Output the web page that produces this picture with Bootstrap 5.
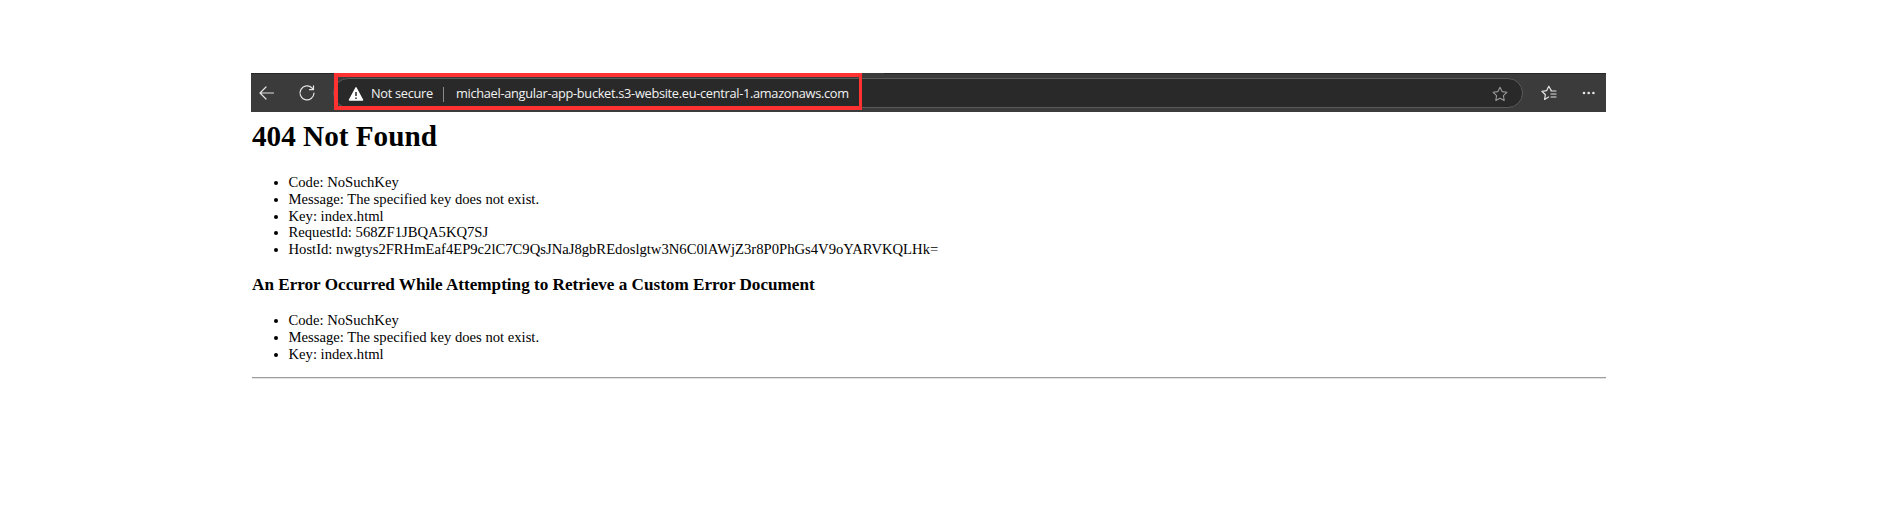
<!DOCTYPE html>
<html lang="en">
<head>
<meta charset="utf-8">
<title>404 Not Found</title>
<link href="https://cdn.jsdelivr.net/npm/bootstrap@5.3.0/dist/css/bootstrap.min.css" rel="stylesheet">
<style>
body{background:#fff;color:#000;font-family:"Liberation Serif",serif}
.page{width:1355px;margin-left:251px;padding-top:73px}
.toolbar{height:39px;padding-top:1px;background:linear-gradient(90deg,#262626 611px,#3b3b3b 611px 633px,#262626 633px) 0 0/100% 1px no-repeat #3b3b3b;color:#e4e4e4}
.toolbar svg{display:block;flex:none}
.back{margin-left:7px}
.reload{margin-left:22px}
.address{width:1190px;height:30px;margin-left:17px;border:1px solid #5a5a5a;border-radius:15px;background:#292929;padding:2px 0 0 14px;font-family:"Open Sans",sans-serif;font-size:12.8px;letter-spacing:-.31px;color:#f2f2f2;white-space:nowrap}
.sep{width:1px;height:15px;background:#8a8a8a;margin:0 12px 0 10px}
.warn{margin-right:7px}
.sec{width:62px}
.star{margin-right:14px}
.favorites{margin-left:18px}
.more{margin-left:25px}
.highlight{left:83px;top:0;width:528px;height:37px;border:3px solid #ff3131;border-width:4px 3px 4px 4px}
h1{font-size:29.2px;font-weight:700;line-height:34px;margin:7px 0 0 1px}
h3{font-size:17.15px;font-weight:700;line-height:20px;margin:16.5px 0 0 1px}
ul{font-size:14.65px;line-height:16.85px;margin:20.9px 0 0;padding-left:37.5px}
h3+ul{margin-top:17.6px}
hr{margin:14.3px 0 0 1px;border:0;height:2px;opacity:1;background:linear-gradient(#9d9d9d 50%,#e3e3e3 50%)}
</style>
</head>
<body>
<main class="page">
<div class="toolbar d-flex align-items-center position-relative">
<svg class="back" width="18" height="18" viewBox="0 0 18 18" fill="none" stroke="currentColor" stroke-width="1.2" stroke-linecap="round" stroke-linejoin="round"><path d="M15.5 9H2M8 3L2 9l6 6"/></svg>
<svg class="reload" width="18" height="18" viewBox="0 0 18 18" fill="none" stroke="currentColor" stroke-width="1.2" stroke-linecap="round" stroke-linejoin="round"><path d="M16 9a7 7 0 1 1-2-5l1.5 1.5M15.5 1.8v3.9h-4"/></svg>
<div class="address d-flex align-items-center">
<svg class="warn" width="16" height="16" viewBox="0 0 16 16"><path d="M8 1.8L14.6 14H1.4Z" fill="#fff" stroke="#fff" stroke-width="1.4" stroke-linejoin="round"/><path d="M8 6v4M8 11.4v1.5" stroke="#292929" stroke-width="1.5"/></svg>
<span class="sec">Not secure</span><span class="sep"></span><span>michael-angular-app-bucket.s3-website.eu-central-1.amazonaws.com</span>
<svg class="star ms-auto" width="16" height="16" viewBox="0 0 16 16" fill="none" stroke="#999" stroke-width="1.1" stroke-linejoin="round"><path d="M8 1.2l2.1 4.4 4.8.7-3.5 3.4.8 4.8L8 12.2l-4.2 2.3.8-4.8L1.1 6.3l4.8-.7z"/></svg>
</div>
<svg class="favorites" width="16" height="16" viewBox="0 0 16 16" fill="none" stroke="currentColor" stroke-width="1.2" stroke-linejoin="round" stroke-linecap="round"><path d="M10.3 5.6L7.8 1.2 5.7 5.6l-4.8.7 3.5 3.4-.8 4.8L7.6 12M10 6h5M10 9h5M10 12h5"/></svg>
<svg class="more" width="14" height="4" viewBox="0 0 14 4" fill="currentColor"><circle cx="2" cy="2" r="1.3"/><circle cx="6.7" cy="2" r="1.3"/><circle cx="11.4" cy="2" r="1.3"/></svg>
<div class="highlight position-absolute"></div>
</div>
<h1>404 Not Found</h1>
<ul>
<li>Code: NoSuchKey</li>
<li>Message: The specified key does not exist.</li>
<li>Key: index.html</li>
<li>RequestId: 568ZF1JBQA5KQ7SJ</li>
<li>HostId: nwgtys2FRHmEaf4EP9c2lC7C9QsJNaJ8gbREdoslgtw3N6C0lAWjZ3r8P0PhGs4V9oYARVKQLHk=</li>
</ul>
<h3>An Error Occurred While Attempting to Retrieve a Custom Error Document</h3>
<ul>
<li>Code: NoSuchKey</li>
<li>Message: The specified key does not exist.</li>
<li>Key: index.html</li>
</ul>
<hr>
</main>
<script src="https://cdn.jsdelivr.net/npm/bootstrap@5.3.0/dist/js/bootstrap.bundle.min.js"></script>
</body>
</html>
